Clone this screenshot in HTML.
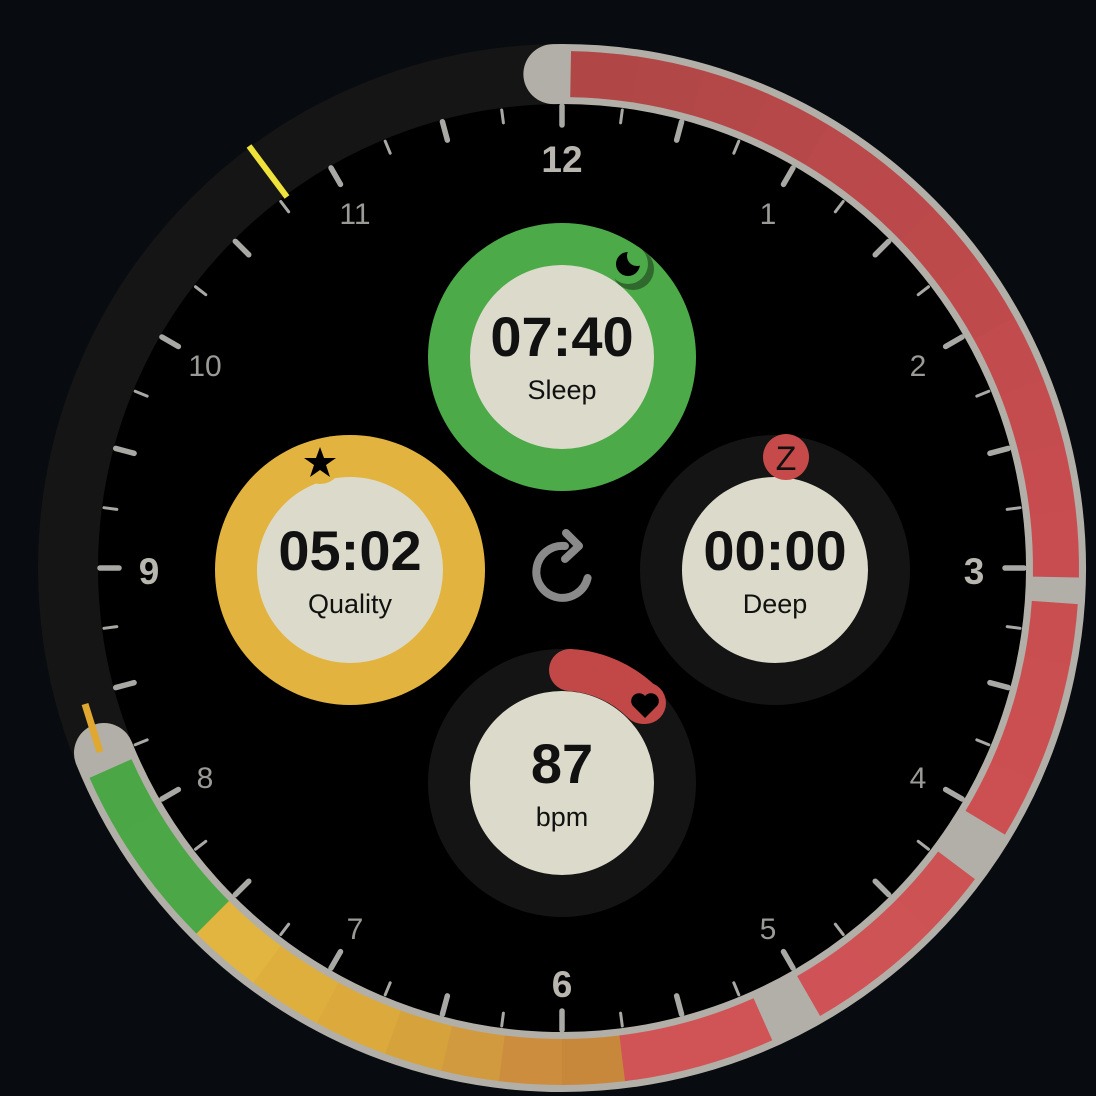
<!DOCTYPE html>
<html><head><meta charset="utf-8"><style>
html,body{margin:0;padding:0;background:#080c10;width:1096px;height:1096px;overflow:hidden}
svg{display:block}
text{font-family:"Liberation Sans",sans-serif}
</style></head><body>
<svg id="s" width="1096" height="1096" viewBox="0 0 1096 1096" xmlns="http://www.w3.org/2000/svg">
<defs>
<mask id="moon"><rect x="600" y="240" width="60" height="50" fill="#fff"/><circle cx="637" cy="256" r="10" fill="#000"/></mask>
</defs>
<rect width="1096" height="1096" fill="#080c10"/>
<circle cx="562" cy="568" r="524" fill="#000"/>
<circle cx="562" cy="568" r="494" fill="none" stroke="#151515" stroke-width="60"/>
<g id="ring"></g>
<g id="ticks"></g>
<g fill="#b8b6ae" font-weight="bold" font-size="37" text-anchor="middle">
<text x="562" y="172">12</text><text x="974" y="584">3</text><text x="562" y="997">6</text><text x="149" y="584">9</text>
</g>
<g fill="#9a9a96" font-size="30" text-anchor="middle">
<text x="768" y="224">1</text><text x="918" y="376">2</text><text x="918" y="788">4</text><text x="768" y="939">5</text>
<text x="355" y="939">7</text><text x="205" y="788">8</text><text x="205" y="376">10</text><text x="355" y="224">11</text>
</g>
<line x1="249" y1="146" x2="287" y2="197" stroke="#efe23a" stroke-width="6" stroke-linecap="butt"/>
<line x1="85" y1="704" x2="100" y2="752" stroke="#e0a830" stroke-width="7"/>

<!-- Sleep -->
<circle cx="562" cy="357" r="134" fill="#4caa48"/>
<circle cx="562" cy="357" r="92" fill="#dcdbcb"/>
<circle cx="633" cy="269" r="21" fill="#1d3d1c" opacity="0.6"/>
<circle cx="628" cy="264" r="20" fill="#4caa48"/>
<circle cx="628" cy="264" r="12" fill="#000" mask="url(#moon)"/>
<text x="562" y="356" font-size="56" font-weight="bold" text-anchor="middle" fill="#111">07:40</text>
<text x="562" y="399" font-size="27" text-anchor="middle" fill="#111">Sleep</text>

<!-- Quality -->
<circle cx="350" cy="570" r="135" fill="#e3b33f"/>
<circle cx="350" cy="570" r="93" fill="#dcdbcb"/>
<circle cx="320" cy="462" r="22" fill="#e3b33f"/>
<polygon points="320,447 324,458 336,458 326,465 330,477 320,470 310,477 314,465 304,458 316,458" fill="#000"/>
<text x="350" y="570" font-size="56" font-weight="bold" text-anchor="middle" fill="#111">05:02</text>
<text x="350" y="613" font-size="27" text-anchor="middle" fill="#111">Quality</text>

<!-- Deep -->
<circle cx="775" cy="570" r="135" fill="#141414"/>
<circle cx="775" cy="570" r="93" fill="#dcdbcb"/>
<circle cx="786" cy="457" r="23" fill="#c64a4a"/>
<text x="786" y="470" font-size="34" text-anchor="middle" fill="#111">Z</text>
<text x="775" y="570" font-size="56" font-weight="bold" text-anchor="middle" fill="#111">00:00</text>
<text x="775" y="613" font-size="27" text-anchor="middle" fill="#111">Deep</text>

<!-- bpm -->
<circle cx="562" cy="783" r="134" fill="#141414"/>
<path d="M570 670 A113 113 0 0 1 643 703" fill="none" stroke="#c24848" stroke-width="42" stroke-linecap="round"/>
<circle cx="562" cy="783" r="92" fill="#dcdbcb"/>
<circle cx="645" cy="703" r="21" fill="#c24848"/>
<path d="M645 718 L633 706 a7 7 0 0 1 12 -10 a7 7 0 0 1 12 10 z" fill="#000"/>
<text x="562" y="783" font-size="56" font-weight="bold" text-anchor="middle" fill="#111">87</text>
<text x="562" y="826" font-size="27" text-anchor="middle" fill="#111">bpm</text>

<!-- refresh -->
<path d="M587.6 578 A26 26 0 1 1 565 546" fill="none" stroke="#8a8a8a" stroke-width="8" stroke-linecap="round"/>
<path d="M566 533 L579 546 L565 559" fill="none" stroke="#8a8a8a" stroke-width="8" stroke-linecap="round" stroke-linejoin="round"/>
</svg>
<script>
var cx=562,cy=568,NS="http://www.w3.org/2000/svg";
function P(r,a){a=a*Math.PI/180;return [cx+r*Math.sin(a),cy-r*Math.cos(a)];}
function arc(r,a1,a2){var p=P(r,a1),q=P(r,a2),l=(a2-a1)>180?1:0;return "M"+p[0]+" "+p[1]+" A"+r+" "+r+" 0 "+l+" 1 "+q[0]+" "+q[1];}
function add(g,tag,at){var e=document.createElementNS(NS,tag);for(var k in at)e.setAttribute(k,at[k]);g.appendChild(e);}
var ring=document.getElementById("ring");
add(ring,"path",{d:arc(494,-1,248),fill:"none",stroke:"#b1afa7","stroke-width":60,"stroke-linecap":"round"});
var segs=[[1,91,"#b04646","#c84d50"],[94,121,"#c94e50","#cc5052"],[127,150,"#cd5254","#cf5356"],[156,173,"#d05456","#d05456"],
[173,187,"#c8883c","#cc8e3e"],[187,200,"#d29a3e","#d6a23c"],[200,225,"#dcaa3c","#e2b440"],[225,246,"#4ca846","#4ba645"]];
segs.forEach(function(s){
 var n=Math.max(1,Math.round((s[1]-s[0])/7.5));var st=(s[1]-s[0])/n;
 for(var i=0;i<n;i++){var t=n>1?i/(n-1):0;
  var c1=parseInt(s[2].slice(1),16),c2=parseInt(s[3].slice(1),16);
  var r=Math.round(((c1>>16)&255)*(1-t)+((c2>>16)&255)*t),g=Math.round(((c1>>8)&255)*(1-t)+((c2>>8)&255)*t),b=Math.round((c1&255)*(1-t)+(c2&255)*t);
  add(ring,"path",{d:arc(494,s[0]+i*st,s[0]+(i+1)*st+0.05),fill:"none",stroke:"rgb("+r+","+g+","+b+")","stroke-width":46});}
});
var tk=document.getElementById("ticks");
for(var i=0;i<48;i++){var a=i*7.5,maj=(i%2==0);
 var p=P(maj?443:449,a),q=P(462,a);
 add(tk,"line",{x1:p[0],y1:p[1],x2:q[0],y2:q[1],stroke:"#a8a8a4","stroke-width":maj?5.5:3,"stroke-linecap":"round"});}
</script>
</body></html>
